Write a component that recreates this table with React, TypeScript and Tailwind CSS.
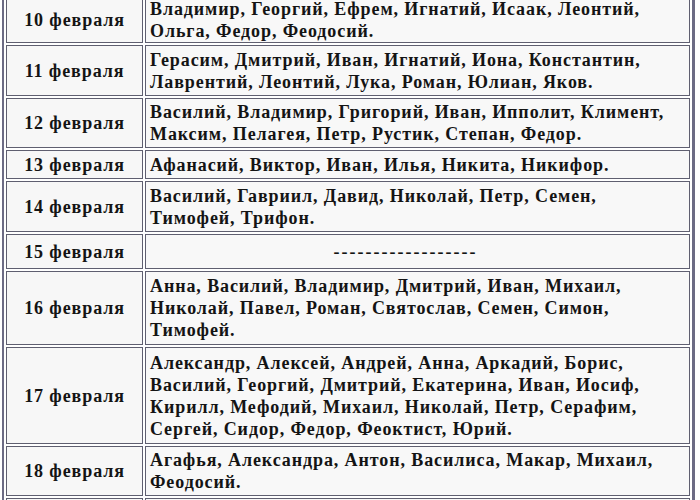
import React from 'react';

type Row = { date: string; lines: string[]; h: string };

const rows: Row[] = [
  { date: '10 февраля', lines: ['Владимир, Георгий, Ефрем, Игнатий, Исаак, Леонтий,', 'Ольга, Федор, Феодосий.'], h: 'h-[45px]' },
  { date: '11 февраля', lines: ['Герасим, Дмитрий, Иван, Игнатий, Иона, Константин,', 'Лаврентий, Леонтий, Лука, Роман, Юлиан, Яков.'], h: 'h-[51px]' },
  { date: '12 февраля', lines: ['Василий, Владимир, Григорий, Иван, Ипполит, Климент,', 'Максим, Пелагея, Петр, Рустик, Степан, Федор.'], h: 'h-[50px]' },
  { date: '13 февраля', lines: ['Афанасий, Виктор, Иван, Илья, Никита, Никифор.'], h: 'h-[29px]' },
  { date: '14 февраля', lines: ['Василий, Гавриил, Давид, Николай, Петр, Семен,', 'Тимофей, Трифон.'], h: 'h-[51px]' },
  { date: '15 февраля', lines: [], h: 'h-[35px]' },
  { date: '16 февраля', lines: ['Анна, Василий, Владимир, Дмитрий, Иван, Михаил,', 'Николай, Павел, Роман, Святослав, Семен, Симон,', 'Тимофей.'], h: 'h-[74px]' },
  { date: '17 февраля', lines: ['Александр, Алексей, Андрей, Анна, Аркадий, Борис,', 'Василий, Георгий, Дмитрий, Екатерина, Иван, Иосиф,', 'Кирилл, Мефодий, Михаил, Николай, Петр, Серафим,', 'Сергей, Сидор, Федор, Феоктист, Юрий.'], h: 'h-[97px]' },
  { date: '18 февраля', lines: ['Агафья, Александра, Антон, Василиса, Макар, Михаил,', 'Феодосий.'], h: 'h-[50px]' },
  { date: '19 февраля', lines: ['Вукол, Дмитрий, Евгений, Иван, Феодор.'], h: 'h-[50px]' },
];

export default function App() {
  return (
    <div className="w-[700px] h-[500px] overflow-hidden bg-white font-['Liberation_Serif',serif] font-bold text-[#141414]">
      <div className="-mt-[7px] ml-[2px] w-[693px] border-2 border-r-[3px] border-[#6c6b84] bg-white">
        <table className="w-full border-separate border-spacing-[2px] text-[18px] leading-[22px] tracking-[0.9px]">
          <tbody>
            {rows.map(r => (
              <tr key={r.date} className={r.h}>
                <td className="w-[137px] border border-[#5f5f70] bg-[#f7f7f7] text-center align-middle whitespace-nowrap">
                  {r.date}
                </td>
                <td className="border border-[#5f5f70] bg-[#f8f8f8] pl-[4px] align-middle whitespace-nowrap">
                  {r.lines.length ? (
                    r.lines.map(l => <div key={l}>{l}</div>)
                  ) : (
                    <div className="text-center tracking-[2px] pr-[28px]">------------------</div>
                  )}
                </td>
              </tr>
            ))}
          </tbody>
        </table>
      </div>
    </div>
  );
}
